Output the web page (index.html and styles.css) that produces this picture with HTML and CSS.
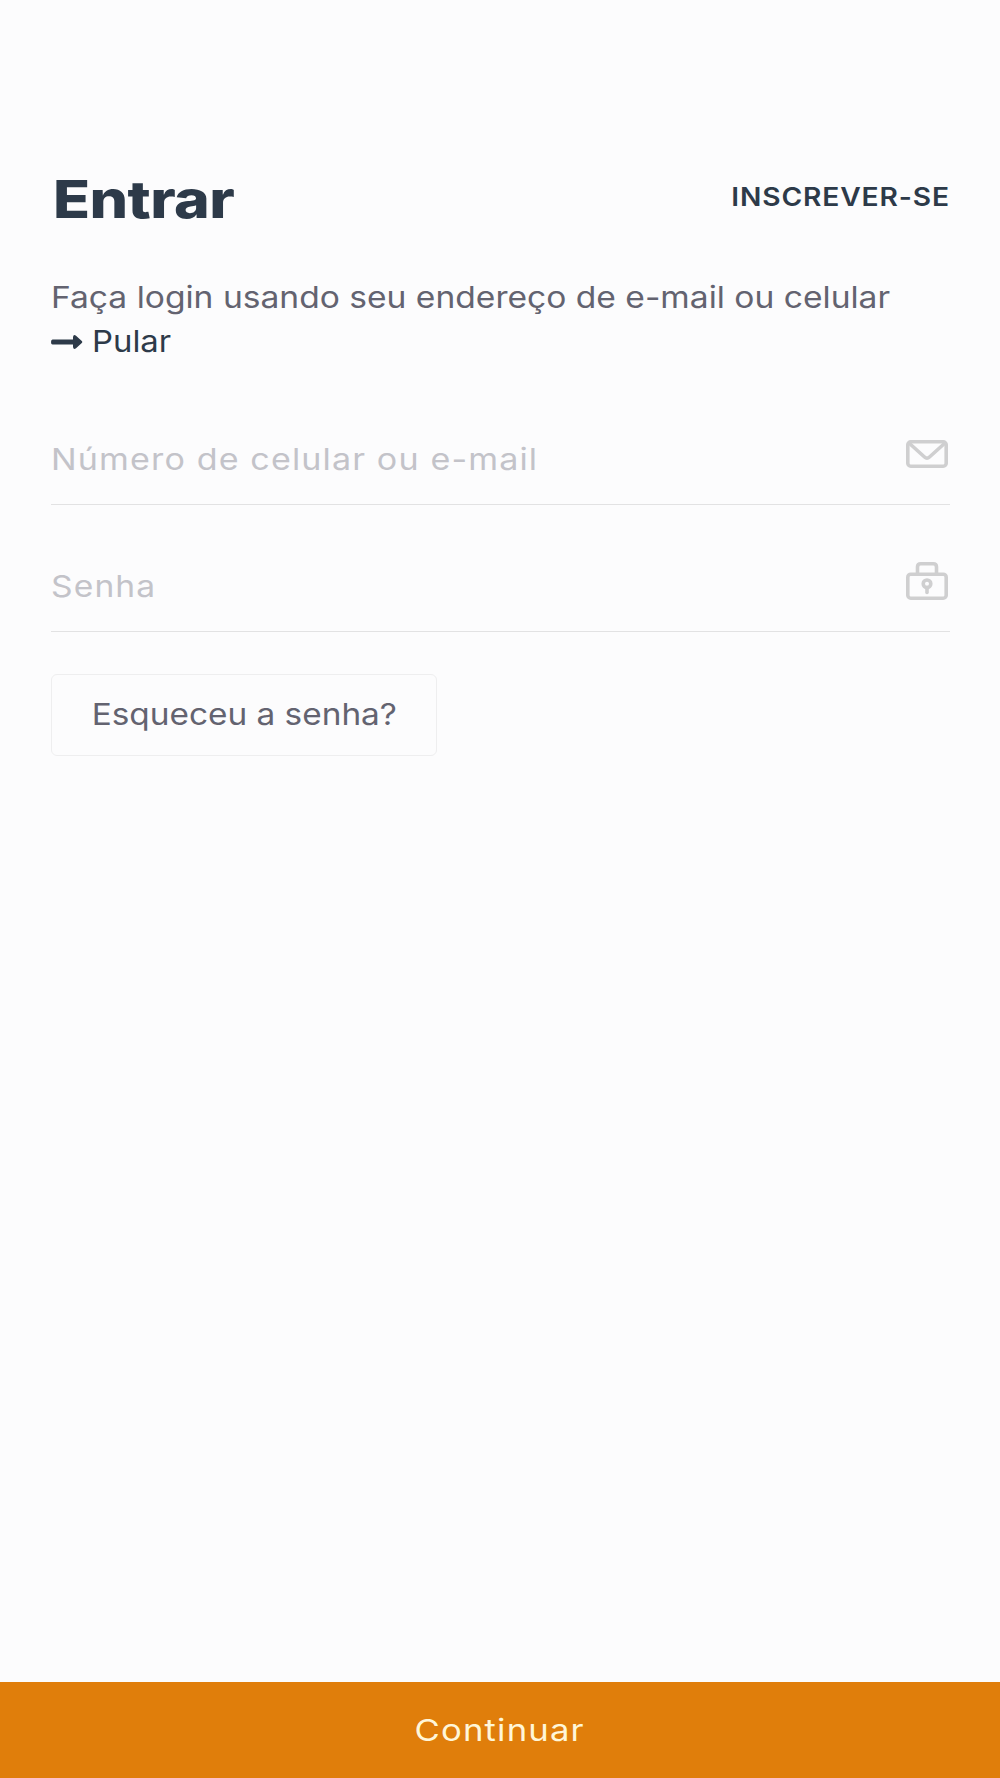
FILE: index.html
```html
<!DOCTYPE html>
<html lang="pt-BR">
<head>
  <meta charset="UTF-8" />
  <meta name="viewport" content="width=device-width, initial-scale=1.0"/>
  <title>Entrar</title>
  <link rel="stylesheet" href="styles.css">
</head>
<body>
  <main class="login">
    <header class="login-header">
      <h1>Entrar</h1>
      <a class="signup" href="#">INSCREVER-SE</a>
    </header>

    <p class="intro"><span class="wide">Faça login usando seu endereço de e-mail ou celular</span></p>
    <a class="skip" href="#">
      <svg class="arrow" viewBox="0 0 32 16" width="32" height="16">
        <path d="M1.500 5.500h20.500V3Q22.500 0 25 1.700L30.800 6.900Q32 8 30.800 9.100L25 14.300Q22.500 16 22 13V10.500H1.500Q0 10.500 0 8T1.500 5.500Z" fill="#2d3a49"/>
      </svg>
      <span class="wide">Pular</span>
    </a>

    <form class="login-form">
      <div class="field">
        <input class="user" type="text" placeholder="Número de celular ou e-mail">
        <svg class="icon" viewBox="0 0 42 28" width="42" height="28">
          <rect x="1.800" y="1.800" width="38.400" height="24.400" rx="3"/>
          <path d="M3 3l15.500 14q2.500 2.200 5 0L39 3"/>
        </svg>
      </div>
      <div class="field">
        <input class="password" type="password" placeholder="Senha">
        <svg class="icon" viewBox="0 0 42 38" width="42" height="38">
          <rect x="1.800" y="12.200" width="38.400" height="24" rx="3"/>
          <path d="M11.500 12V5q0-3.200 3.300-3.200h12.400q3.300 0 3.300 3.200v7"/>
          <circle cx="21" cy="21.800" r="3.800"/>
          <path d="M21 25.500v5" stroke-linecap="round"/>
        </svg>
      </div>
      <button class="forgot" type="button"><span class="wide">Esqueceu a senha?</span></button>
    </form>
  </main>

  <button class="continue" type="button"><span class="wide">Continuar</span></button>
</body>
</html>
```

FILE: styles.css
```css
* {
  box-sizing: border-box;
}

body {
  margin: 0;
  min-height: 1778px;
  display: flex;
  flex-direction: column;
  font-family: Inter, sans-serif;
  font-size: 30px;
  background: #fcfcfd;
  color: #2d3a49;
}

a {
  color: inherit;
  text-decoration: none;
}

button,
input {
  font: inherit;
}

/* extended lettering */
.wide {
  display: inline-block;
  transform: scaleX(1.119);
  transform-origin: left center;
}

.login {
  flex: 1;
  padding: 169px 50px 0 51px;
}

.login-header {
  display: flex;
  justify-content: space-between;
  align-items: center;
  height: 60px;
}

h1 {
  margin: 1px 0 0 2px;
  font-size: 52px;
  font-weight: 800;
  line-height: 60px;
  letter-spacing: -0.5px;
  transform: scaleX(1.17);
  transform-origin: left center;
}

.signup {
  padding-bottom: 5px;
  font-size: 25.5px;
  font-weight: 600;
  letter-spacing: 0.8px;
  transform: scaleX(1.105);
  transform-origin: right center;
}

.intro {
  margin: 46px 0 0;
  line-height: 44px;
  white-space: nowrap;
  color: #636370;
}

.skip {
  display: flex;
  align-items: center;
  gap: 9px;
  height: 44px;
}

.skip .wide {
  transform: scaleX(1.095);
}

.arrow {
  margin-top: 1px;
}

.login-form {
  margin-top: 48px;
}

.field {
  display: flex;
  align-items: center;
  justify-content: space-between;
  height: 94px;
  margin-bottom: 33px;
  border-bottom: 1px solid #e2e2e3;
}

.field input {
  width: 700px;
  height: 60px;
  padding: 2px 0 0;
  border: none;
  outline: none;
  background: none;
  letter-spacing: 1px;
  transform: scaleX(1.135);
  transform-origin: left center;
}

.field .password {
  transform: scaleX(1.12);
}

.field input::placeholder {
  color: #c3c3c9;
  opacity: 1;
}

.icon {
  margin: 0 2px 8px 0;
  fill: none;
  stroke: #cfcfd0;
  stroke-width: 3.6;
}

.forgot {
  display: block;
  margin-top: 42px;
  width: 386px;
  height: 82px;
  padding: 0 0 2px;
  border: 1px solid #eeeeef;
  border-radius: 6px;
  background: none;
  color: #636370;
}

.forgot .wide {
  transform: scaleX(1.112);
  transform-origin: center;
}

.continue {
  height: 96px;
  padding: 0;
  border: none;
  background: #e07e0b;
  color: #fff6d8;
  letter-spacing: 1px;
}

.continue .wide {
  transform: scaleX(1.155);
  transform-origin: center;
}
```
